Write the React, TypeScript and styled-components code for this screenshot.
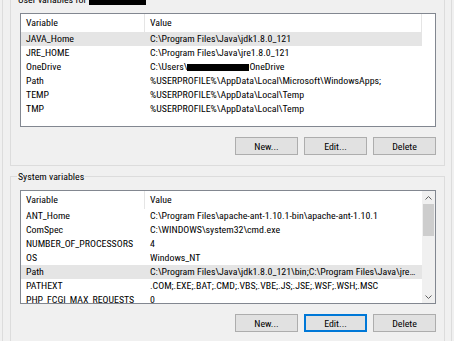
import React from 'react';
import styled, { createGlobalStyle } from 'styled-components';

const Global = createGlobalStyle`
  html, body { margin: 0; padding: 0; background: #f0f0f0; }
  body {
    font-family: "Roboto Condensed", "Roboto", "Segoe UI", sans-serif;
    font-size: 9.9px;
    color: #000;
    overflow: hidden;
  }
`;

const Window = styled.div`
  margin-left: 2px;
  width: 450px;
  height: 341px;
  box-sizing: border-box;
  border-left: 1px solid #dcdcdc;
  border-right: 1px solid #dcdcdc;
  padding: 0 6px 0 7px;
  overflow: hidden;
  display: flex;
  flex-direction: column;
  gap: 10px;
`;

const Group = styled.section<{ $first?: boolean }>`
  position: relative;
  flex-shrink: 0;
  border: 1px solid #dcdcdc;
  padding: 13px 8px 10px 9px;
  margin-top: ${(p) => (p.$first ? '-1px' : '0')};
  display: flex;
  flex-direction: column;
  gap: 10px;
`;

const Legend = styled.div`
  position: absolute;
  top: -7px;
  left: 6px;
  padding: 0 1px;
  background: #f0f0f0;
  line-height: 14px;
  white-space: nowrap;
`;

const Redacted = styled.span<{ $w: number; $h: number }>`
  display: inline-block;
  width: ${(p) => p.$w}px;
  height: ${(p) => p.$h}px;
  background: #000;
  vertical-align: middle;
`;

const ListView = styled.div`
  height: 114px;
  box-sizing: border-box;
  border: 1px solid #828790;
  background: #fff;
  display: flex;
  overflow: hidden;
`;

const ListBody = styled.div`
  flex: 1;
  min-width: 0;
  display: flex;
  flex-direction: column;
`;

const HeaderRow = styled.div`
  display: grid;
  grid-template-columns: 124px 277px 1fr;
  height: 18px;
  flex-shrink: 0;
`;

const HeaderCell = styled.div`
  box-sizing: border-box;
  border-right: 1px solid #e5e5e5;
  padding-left: 5px;
  line-height: 18px;
  &:last-child { border-right: none; }
`;

const Row = styled.div<{ $selected?: boolean }>`
  display: grid;
  grid-template-columns: 124px 277px;
  width: 401px;
  height: 14px;
  flex-shrink: 0;
  background: ${(p) => (p.$selected ? '#e5e5e5' : 'transparent')};
`;

const Cell = styled.div`
  padding: 0 4px 0 5px;
  line-height: 14px;
  white-space: nowrap;
  overflow: hidden;
  text-overflow: ellipsis;
`;

const ScrollBar = styled.div`
  width: 13px;
  flex-shrink: 0;
  background: #f0f0f0;
  display: flex;
  flex-direction: column;
`;

const ScrollArrow = styled.div`
  height: 13px;
  display: flex;
  align-items: center;
  justify-content: center;
  flex-shrink: 0;
`;

const ScrollTrack = styled.div`
  flex: 1;
  padding: 0 1px;
`;

const Thumb = styled.div`
  height: 32px;
  background: #cdcdcd;
`;

const ButtonRow = styled.div`
  display: flex;
  justify-content: flex-end;
  gap: 6px;
`;

const Button = styled.button<{ $focused?: boolean }>`
  width: 63px;
  height: 18px;
  box-sizing: border-box;
  margin: 0;
  padding: 0;
  font: inherit;
  color: #000;
  background: #e1e1e1;
  border: 1px solid ${(p) => (p.$focused ? '#0078d7' : '#adadad')};
  box-shadow: ${(p) => (p.$focused ? 'inset 0 0 0 1px #0078d7' : 'none')};
`;

type Item = { name: string; value: React.ReactNode; selected?: boolean };

const userVars: Item[] = [
  { name: 'JAVA_Home', value: 'C:\\Program Files\\Java\\jdk1.8.0_121', selected: true },
  { name: 'JRE_HOME', value: 'C:\\Program Files\\Java\\jre1.8.0_121' },
  {
    name: 'OneDrive',
    value: (
      <>
        C:\Users\<Redacted $w={62} $h={7} />OneDrive
      </>
    ),
  },
  { name: 'Path', value: '%USERPROFILE%\\AppData\\Local\\Microsoft\\WindowsApps;' },
  { name: 'TEMP', value: '%USERPROFILE%\\AppData\\Local\\Temp' },
  { name: 'TMP', value: '%USERPROFILE%\\AppData\\Local\\Temp' },
];

const systemVars: Item[] = [
  { name: 'ANT_Home', value: 'C:\\Program Files\\apache-ant-1.10.1-bin\\apache-ant-1.10.1' },
  { name: 'ComSpec', value: 'C:\\WINDOWS\\system32\\cmd.exe' },
  { name: 'NUMBER_OF_PROCESSORS', value: '4' },
  { name: 'OS', value: 'Windows_NT' },
  {
    name: 'Path',
    value:
      'C:\\Program Files\\Java\\jdk1.8.0_121\\bin;C:\\Program Files\\Java\\jre1.8.0_121\\bin;C:\\ProgramData\\Oracle\\Java\\javapath',
    selected: true,
  },
  { name: 'PATHEXT', value: '.COM;.EXE;.BAT;.CMD;.VBS;.VBE;.JS;.JSE;.WSF;.WSH;.MSC' },
  { name: 'PHP_FCGI_MAX_REQUESTS', value: '0' },
];

const Chevron = ({ up }: { up?: boolean }) => (
  <svg width="7" height="4" viewBox="0 0 7 4">
    <polyline
      points={up ? '0.5,3.5 3.5,0.5 6.5,3.5' : '0.5,0.5 3.5,3.5 6.5,0.5'}
      fill="none"
      stroke="#606060"
      strokeWidth="1"
    />
  </svg>
);

const VarList = ({ items, scroll }: { items: Item[]; scroll?: boolean }) => (
  <ListView>
    <ListBody>
      <HeaderRow>
        <HeaderCell>Variable</HeaderCell>
        <HeaderCell>Value</HeaderCell>
        {!scroll && <HeaderCell />}
      </HeaderRow>
      {items.map((it) => (
        <Row key={it.name} $selected={it.selected}>
          <Cell>{it.name}</Cell>
          <Cell>{it.value}</Cell>
        </Row>
      ))}
    </ListBody>
    {scroll && (
      <ScrollBar>
        <ScrollArrow>
          <Chevron up />
        </ScrollArrow>
        <ScrollTrack>
          <Thumb />
        </ScrollTrack>
        <ScrollArrow>
          <Chevron />
        </ScrollArrow>
      </ScrollBar>
    )}
  </ListView>
);

const Buttons = ({ focusEdit }: { focusEdit?: boolean }) => (
  <ButtonRow>
    <Button>New...</Button>
    <Button $focused={focusEdit}>Edit...</Button>
    <Button>Delete</Button>
  </ButtonRow>
);

export default function App() {
  return (
    <>
      <Global />
      <Window>
        <Group $first>
          <Legend>
            User variables for <Redacted $w={57} $h={10} />
          </Legend>
          <VarList items={userVars} />
          <Buttons />
        </Group>
        <Group>
          <Legend>System variables</Legend>
          <VarList items={systemVars} scroll />
          <Buttons focusEdit />
        </Group>
      </Window>
    </>
  );
}
